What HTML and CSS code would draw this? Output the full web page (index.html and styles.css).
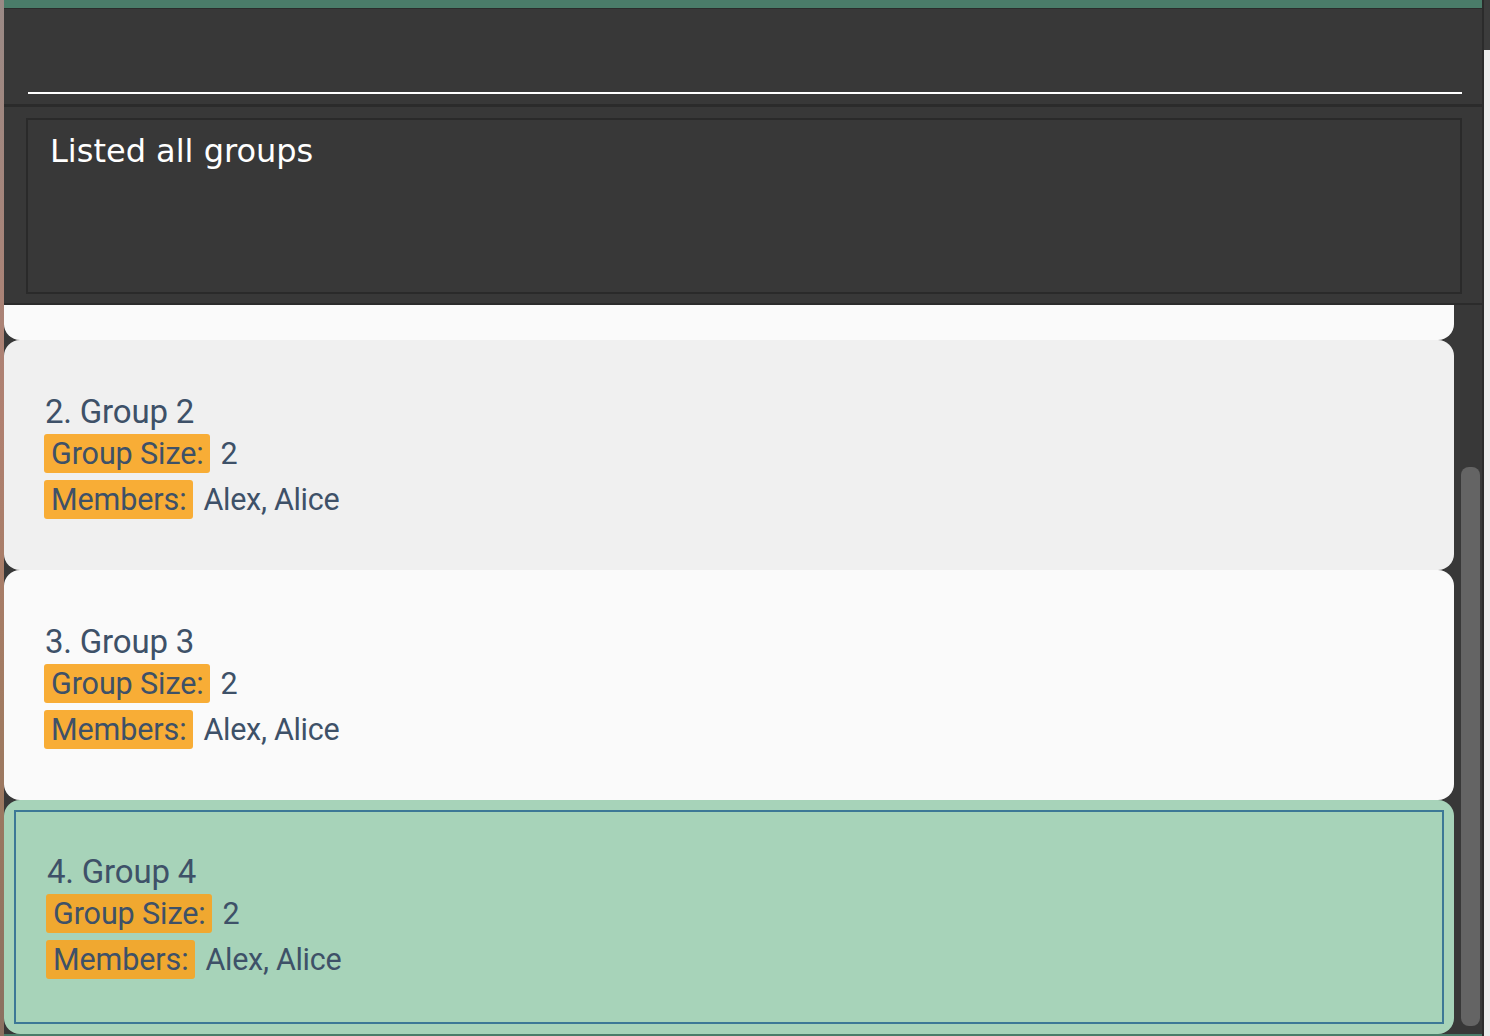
FILE: index.html
```html
<!DOCTYPE html>
<html>
<head>
<meta charset="utf-8">
<link rel="stylesheet" href="styles.css">
</head>
<body>
<div class="screen">
  <div class="desk-left"></div>
  <div class="window">
    <div class="titlebar"></div>
    <div class="command">
      <div class="command-line"></div>
    </div>
    <div class="result">
      <div class="result-box">Listed all groups</div>
    </div>
    <div class="list-area">
      <div class="list">
        <div class="card card-light card-clipped"></div>
        <div class="card card-grey">
          <div class="card-inner">
            <div class="title">2. Group 2</div>
            <div class="row"><span class="badge">Group Size:</span><span class="val">2</span></div>
            <div class="row"><span class="badge">Members:</span><span class="val">Alex, Alice</span></div>
          </div>
        </div>
        <div class="card card-light">
          <div class="card-inner">
            <div class="title">3. Group 3</div>
            <div class="row"><span class="badge">Group Size:</span><span class="val">2</span></div>
            <div class="row"><span class="badge">Members:</span><span class="val">Alex, Alice</span></div>
          </div>
        </div>
        <div class="card card-selected">
          <div class="card-inner">
            <div class="title">4. Group 4</div>
            <div class="row"><span class="badge">Group Size:</span><span class="val">2</span></div>
            <div class="row"><span class="badge">Members:</span><span class="val">Alex, Alice</span></div>
          </div>
        </div>
      </div>
      <div class="scrollbar"><div class="thumb"></div></div>
    </div>
    <div class="bottombar"></div>
  </div>
  <div class="desk-right">
    <div class="dr-top"></div>
    <div class="dr-bottom"></div>
  </div>
</div>
</body>
</html>
```
FILE: styles.css
```css
html, body {
  margin: 0;
  padding: 0;
  width: 1490px;
  height: 1036px;
  overflow: hidden;
  background: #383838;
}
.screen {
  display: flex;
  width: 1490px;
  height: 1036px;
}
.desk-left {
  width: 4px;
  background: linear-gradient(to bottom, #9a8a86 0%, #b08070 40%, #a07a60 70%, #8a7060 100%);
}
.window {
  width: 1480px;
  display: flex;
  flex-direction: column;
  background: #383838;
  box-sizing: border-box;
  border-right: 2px solid #2b2b2b;
}
.titlebar {
  height: 8px;
  background: #4a7c69;
  border-bottom: 1px solid #2b2b2b;
}
.command {
  flex: none;
  height: 98px;
  display: flex;
  align-items: flex-end;
  padding: 0 20px 10px 24px;
  box-sizing: border-box;
  border-bottom: 3px solid #2b2b2b;
}
.command-line {
  height: 2px;
  flex: 1;
  background: #ffffff;
}
.result {
  flex: none;
  height: 198px;
  padding: 11px 20px 9px 22px;
  box-sizing: border-box;
  border-bottom: 2px solid #2b2b2b;
}
.result-box {
  height: 176px;
  box-sizing: border-box;
  border: 2px solid #2a2a2a;
  color: #ffffff;
  font-family: "DejaVu Sans", sans-serif;
  font-size: 32px;
  line-height: 38px;
  padding: 12px 0 0 22px;
}
.list-area {
  flex: 1;
  display: flex;
  overflow: hidden;
  min-height: 0;
}
.list {
  width: 1450px;
  display: flex;
  flex-direction: column;
  overflow: hidden;
}
.card {
  flex: none;
  height: 230px;
  border-radius: 16px;
  box-sizing: border-box;
  font-family: Roboto, "Liberation Sans", sans-serif;
  color: #3e5168;
}
.card-clipped {
  margin-top: -195px;
}
.card-light { background: #fafafa; }
.card-grey { background: #f0f0f0; }
.card-selected {
  background: #a7d3b9;
  height: 234px;
  padding: 10px;
}
.card-inner {
  height: 100%;
  box-sizing: border-box;
  padding: 52px 0 0 40px;
}
.card-selected .card-inner {
  border: 2px solid #3d7896;
  padding: 40px 0 0 30px;
}
.title {
  font-size: 33px;
  line-height: 40px;
  padding-left: 1px;
  letter-spacing: -0.2px;
}
.row {
  display: flex;
  align-items: center;
  font-size: 30.5px;
  letter-spacing: -0.3px;
}
.row + .row { margin-top: 7px; }
.title + .row { margin-top: 2px; }
.badge {
  background: #f8ad36;
  border-radius: 3px;
  padding: 0 6px 0 7px;
  height: 39px;
  line-height: 39px;
  letter-spacing: -0.1px;
}
.card-selected .badge { background: #f0a830; }
.val {
  margin-left: 11px;
}
.scrollbar {
  flex: 1;
  position: relative;
  background: #383838;
  padding: 162px 2px 8px 7px;
  box-sizing: border-box;
}
.thumb {
  height: 100%;
  background: #646464;
  border-radius: 8px;
}
.bottombar {
  flex: none;
  height: 2px;
  background: #4a7c69;
}
.desk-right {
  width: 6px;
  display: flex;
  flex-direction: column;
}
.dr-top {
  height: 50px;
  background: #3c3c3c;
}
.dr-bottom {
  flex: 1;
  background: #ececec;
}
```
